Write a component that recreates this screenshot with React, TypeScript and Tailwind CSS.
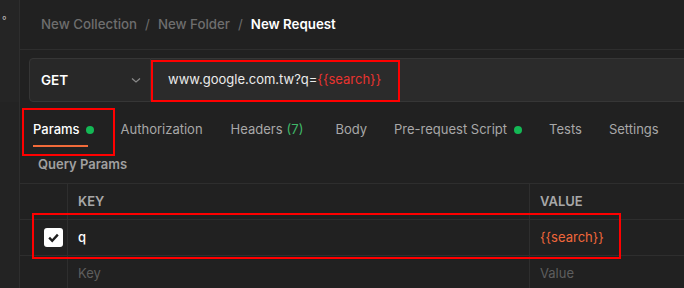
import React from "react";

export default function App() {
  const tabs = [
    { label: "Authorization", ml: "ml-[27px]" },
    { label: "Headers", extra: "(7)", ml: "ml-[28px]" },
    { label: "Body", ml: "ml-[32px]" },
    { label: "Pre-request Script", dot: true, ml: "ml-[27px]" },
    { label: "Tests", ml: "ml-[27px]" },
    { label: "Settings", ml: "ml-[27px]" },
  ];
  return (
    <div
      className="relative flex h-[288px] w-[684px] overflow-hidden bg-[#212121] text-[13px]"
      style={{ fontFamily: "Inter, 'Noto Sans', sans-serif" }}
    >
      {/* sidebar */}
      <div className="flex w-[20px] shrink-0 flex-col border-r border-[#2e2e2e]">
        <div className="h-[102px] shrink-0 bg-[#252525] pl-[2px] pt-[15px] text-[10px] leading-none text-[#bdbdbd]">°</div>
        <div className="flex-1 bg-[#232323]" />
      </div>

      {/* main */}
      <div className="flex min-w-0 flex-1 flex-col">
        <div className="flex h-[50px] shrink-0 items-center border-b border-[#2e2e2e] pl-[21px] text-[13.3px]">
          <span className="font-medium text-[#6e6e6e]">New Collection</span>
          <span className="mx-[8px] text-[#6e6e6e]">/</span>
          <span className="font-medium text-[#6e6e6e]">New Folder</span>
          <span className="mx-[8px] text-[#6e6e6e]">/</span>
          <span className="font-semibold text-white">New Request</span>
        </div>

        <div className="flex shrink-0 pl-[9px] pt-[8px]">
          <div className="flex h-[44px] w-[122px] shrink-0 items-center justify-between rounded-l-[4px] border border-[#363636] bg-[#282828] pl-[11px] pr-[8px]">
            <span className="text-[13.5px] font-semibold text-white">GET</span>
            <svg width="12" height="12" viewBox="0 0 12 12" fill="none">
              <path d="M2 4.5 L6 8 L10 4.5" stroke="#8a8a8a" strokeWidth="1.2" />
            </svg>
          </div>
          <div className="flex h-[44px] flex-1 items-center border-y border-[#363636] bg-[#2b2b2b] pl-[17px] text-[13px]">
            <span className="text-[#ececec]">www.google.com.tw?q=</span>
            <span className="text-[#e8332f]">{"{{search}}"}</span>
          </div>
        </div>

        <div className="mt-[4px] flex h-[47px] shrink-0 items-center pl-[13px] text-[13px]">
          <div className="relative flex items-center">
            <span className="font-medium text-white">Params</span>
            <span className="ml-[6px] h-[8px] w-[8px] rounded-full bg-[#14b855]" />
            <div className="absolute bottom-[-8px] left-0 right-[6px] h-[2px] bg-[#f26b3a]" />
          </div>
          {tabs.map((t) => (
            <div key={t.label} className={`${t.ml} flex items-center text-[#a8a8a8]`}>
              <span>{t.label}</span>
              {t.extra && <span className="ml-[4px] text-[#3fb868]">{t.extra}</span>}
              {t.dot && <span className="ml-[7px] h-[8px] w-[8px] rounded-full bg-[#14b855]" />}
            </div>
          ))}
        </div>

        <div className="mb-[6px] flex h-[24px] shrink-0 items-center pl-[18px] text-[13px] font-semibold text-[#a0a0a0]">
          Query Params
        </div>

        <div className="shrink-0 border-t border-[#2e2e2e]">
          <div className="flex h-[36px] border-b border-[#2e2e2e] text-[13px] font-semibold text-[#a8a8a8]">
            <div className="w-[48px] border-r border-[#2e2e2e]" />
            <div className="flex w-[462px] items-center border-r border-[#2e2e2e] pl-[10px]">KEY</div>
            <div className="flex flex-1 items-center pl-[10px]">VALUE</div>
          </div>
          <div className="flex h-[36px] border-b border-[#2e2e2e] text-[13px]">
            <div className="flex w-[48px] items-center justify-center border-r border-[#2e2e2e] pl-[20px]">
              <div className="flex h-[19px] w-[19px] items-center justify-center rounded-[3px] bg-white">
                <svg width="13" height="13" viewBox="0 0 12 12" fill="none">
                  <path d="M2 6.2 L4.8 9 L10 3.4" stroke="#1e1e1e" strokeWidth="2.2" />
                </svg>
              </div>
            </div>
            <div className="flex w-[462px] items-center border-r border-[#2e2e2e] pl-[10px] font-medium text-white">q</div>
            <div className="flex flex-1 items-center pl-[10px] text-[#f0673b]">{"{{search}}"}</div>
          </div>
          <div className="flex h-[36px] text-[13px] text-[#5e5e5e]">
            <div className="w-[48px] border-r border-[#2e2e2e]" />
            <div className="flex w-[462px] items-center border-r border-[#2e2e2e] pl-[10px]">Key</div>
            <div className="flex flex-1 items-center pl-[10px]">Value</div>
          </div>
        </div>
      </div>

      {/* annotation boxes */}
      <div className="pointer-events-none absolute left-[151px] top-[60px] h-[42px] w-[249px] border-2 border-[#ff0000]" />
      <div className="pointer-events-none absolute left-[22px] top-[108px] h-[48px] w-[93px] border-2 border-[#ff0000]" />
      <div className="pointer-events-none absolute left-[32px] top-[213px] h-[46px] w-[589px] border-2 border-[#ff0000]" />
    </div>
  );
}
